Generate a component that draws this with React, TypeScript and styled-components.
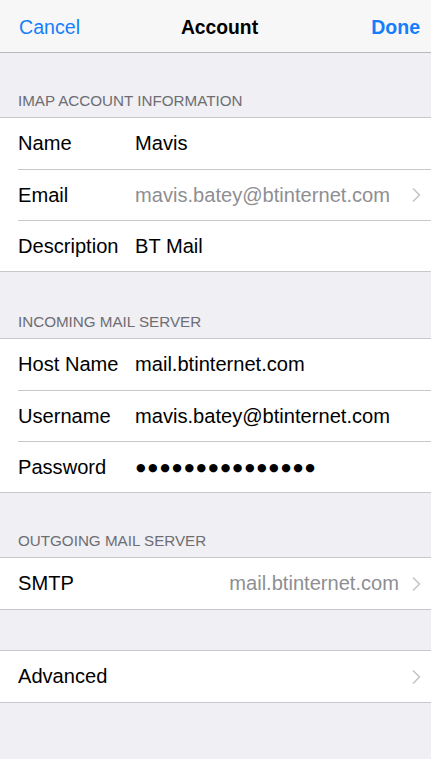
import styled, { createGlobalStyle } from 'styled-components'

const GlobalStyle = createGlobalStyle`
  html, body {
    margin: 0;
    padding: 0;
    background: #efeff4;
  }
  body {
    font-family: "Liberation Sans", Arial, sans-serif;
    -webkit-font-smoothing: antialiased;
  }
`

const Screen = styled.div`
  width: 431px;
  min-height: 759px;
  background: #efeff4;
`

const NavBar = styled.div`
  height: 49px;
  display: grid;
  grid-template-columns: 1fr auto 1fr;
  align-items: center;
  padding: 3px 11px 0 19px;
  background: #f7f7f7;
  border-bottom: 1px solid #b8b8bc;
`

const NavButton = styled.button<{ $bold?: boolean; $right?: boolean }>`
  border: none;
  background: none;
  padding: 0;
  font-family: inherit;
  font-size: ${p => (p.$bold ? '19.5px' : '19.6px')};
  font-weight: ${p => (p.$bold ? 700 : 400)};
  color: #157efb;
  justify-self: ${p => (p.$right ? 'end' : 'start')};
  cursor: pointer;
`

const NavTitle = styled.div`
  font-size: 19.3px;
  font-weight: 700;
  color: #000;
`

const SectionHeader = styled.div<{ $height?: number }>`
  height: ${p => p.$height ?? 64}px;
  box-sizing: border-box;
  display: flex;
  align-items: flex-end;
  padding: 0 18px 8px;
  font-size: 15.2px;
  color: #6d6d72;
`

const Spacer = styled.div`
  height: 40px;
`

const Group = styled.div`
  background: #fff;
  border-top: 1px solid #c8c7cc;
  border-bottom: 1px solid #c8c7cc;
`

const Row = styled.div`
  padding-left: 18px;
  & + & > div {
    border-top: 1px solid #c8c7cc;
  }
`

const RowInner = styled.div`
  height: 51px;
  box-sizing: border-box;
  display: flex;
  align-items: center;
  padding-right: 10px;
  font-size: 20.1px;
  color: #000;
`

const Label = styled.div<{ $auto?: boolean }>`
  width: ${p => (p.$auto ? 'auto' : '117px')};
  flex: ${p => (p.$auto ? '1' : 'none')};
  white-space: nowrap;
`

const Value = styled.div<{ $muted?: boolean; $right?: boolean }>`
  flex: 1;
  white-space: nowrap;
  color: ${p => (p.$muted ? '#8e8e93' : '#000')};
  text-align: ${p => (p.$right ? 'right' : 'left')};
`

const Dots = styled.div`
  flex: 1;
  padding-left: 1px;
  font-family: "DejaVu Sans", sans-serif;
  font-size: 11px;
  letter-spacing: 2.5px;
  color: #000;
`

const ChevronBox = styled.div`
  width: 10px;
  margin-left: 12px;
  display: flex;
  align-items: center;
  justify-content: flex-end;
`

const Chevron = () => (
  <ChevronBox>
    <svg width="9" height="16" viewBox="0 0 9 16">
      <polyline points="1,1.5 7.5,8 1,14.5" fill="none" stroke="#c4c4c9" strokeWidth="1.5" />
    </svg>
  </ChevronBox>
)

export default function App() {
  return (
    <>
      <GlobalStyle />
      <Screen>
        <NavBar>
          <NavButton>Cancel</NavButton>
          <NavTitle>Account</NavTitle>
          <NavButton $bold $right>Done</NavButton>
        </NavBar>

        <SectionHeader>IMAP ACCOUNT INFORMATION</SectionHeader>
        <Group>
          <Row><RowInner><Label>Name</Label><Value>Mavis</Value></RowInner></Row>
          <Row>
            <RowInner>
              <Label>Email</Label>
              <Value $muted>mavis.batey@btinternet.com</Value>
              <Chevron />
            </RowInner>
          </Row>
          <Row><RowInner><Label>Description</Label><Value>BT Mail</Value></RowInner></Row>
        </Group>

        <SectionHeader $height={66}>INCOMING MAIL SERVER</SectionHeader>
        <Group>
          <Row><RowInner><Label>Host Name</Label><Value>mail.btinternet.com</Value></RowInner></Row>
          <Row><RowInner><Label>Username</Label><Value>mavis.batey@btinternet.com</Value></RowInner></Row>
          <Row><RowInner><Label>Password</Label><Dots>●●●●●●●●●●●●●●●</Dots></RowInner></Row>
        </Group>

        <SectionHeader $height={64}>OUTGOING MAIL SERVER</SectionHeader>
        <Group>
          <Row>
            <RowInner>
              <Label $auto>SMTP</Label>
              <Value $muted $right>mail.btinternet.com</Value>
              <Chevron />
            </RowInner>
          </Row>
        </Group>

        <Spacer />
        <Group>
          <Row>
            <RowInner>
              <Label $auto>Advanced</Label>
              <Chevron />
            </RowInner>
          </Row>
        </Group>
      </Screen>
    </>
  )
}
